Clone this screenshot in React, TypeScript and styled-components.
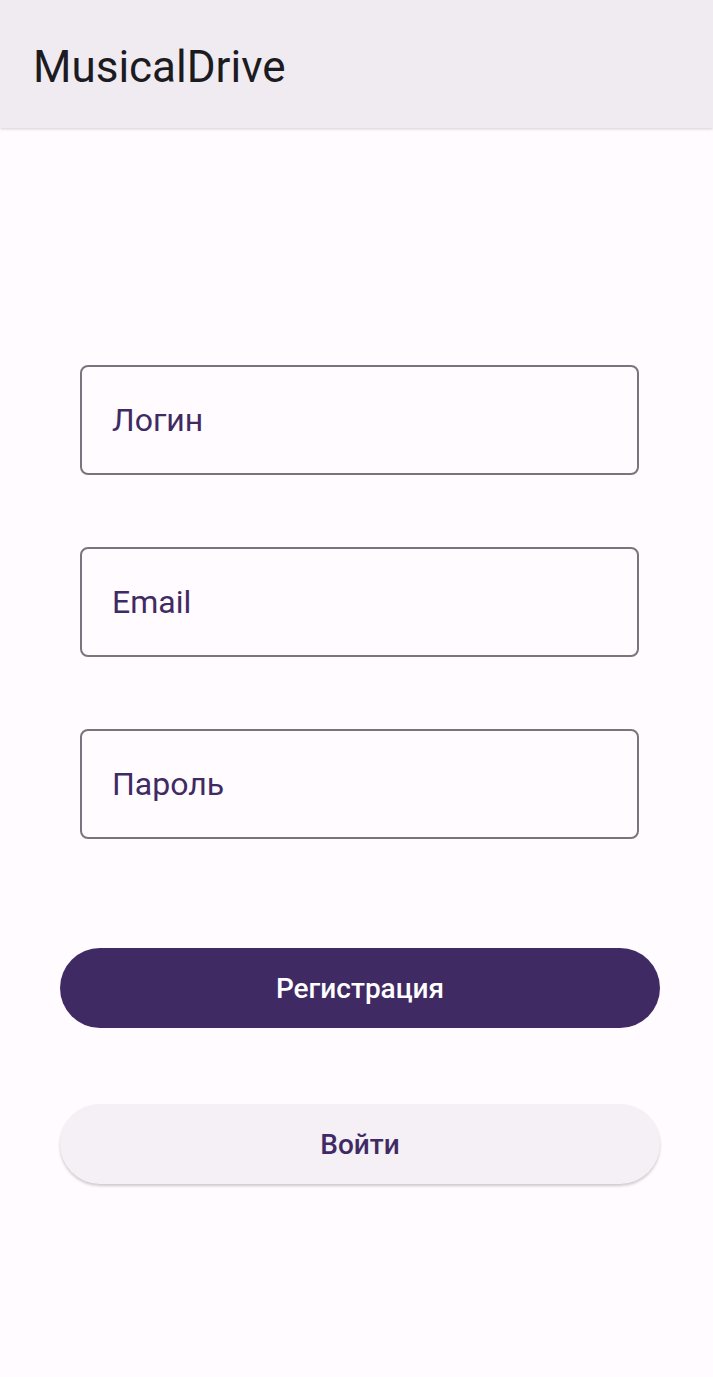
import React from "react";
import styled, { createGlobalStyle } from "styled-components";

const Global = createGlobalStyle`
  html, body { margin: 0; padding: 0; background: #FFFBFE; }
  body { font-family: Roboto, "Noto Sans", sans-serif; }
  * { box-sizing: border-box; }
`;

const Page = styled.div`
  width: 713px;
  min-height: 1377px;
  background: #FFFBFE;
  display: flex;
  flex-direction: column;
`;

const AppBar = styled.header`
  height: 128px;
  background: #EFEBF1;
  display: flex;
  align-items: center;
  padding: 6px 0 0 33px;
  box-shadow: 0 1px 3px rgba(0, 0, 0, 0.18);
  position: relative;
  z-index: 1;
`;

const Title = styled.h1`
  margin: 0;
  font-family: Roboto, sans-serif;
  font-weight: 400;
  font-size: 44px;
  color: #1C1B1F;
  letter-spacing: 0;
`;

const Form = styled.main`
  display: flex;
  flex-direction: column;
  padding: 237px 53px 0 60px;
`;

const Fields = styled.div`
  display: flex;
  flex-direction: column;
  gap: 72px;
  padding: 0 21px 0 20px;
`;

const Field = styled.div`
  height: 110px;
  border: 2px solid #79747E;
  border-radius: 8px;
  display: flex;
  align-items: center;
  padding-left: 30px;
  font-size: 32px;
  color: #3F2B63;
`;

const Buttons = styled.div`
  display: flex;
  flex-direction: column;
  gap: 76px;
  margin-top: 109px;
`;

const Button = styled.button<{ $primary?: boolean }>`
  height: 80px;
  width: 100%;
  border: none;
  border-radius: 40px;
  font-family: Roboto, sans-serif;
  font-weight: 500;
  font-size: 28px;
  background: ${(p) => (p.$primary ? "#3F2A64" : "#F4F0F5")};
  color: ${(p) => (p.$primary ? "#FFFFFF" : "#3F2A64")};
  box-shadow: ${(p) => (p.$primary ? "none" : "0 2px 3px rgba(0,0,0,0.2)")};
`;

export default function App() {
  return (
    <Page>
      <Global />
      <AppBar>
        <Title>MusicalDrive</Title>
      </AppBar>
      <Form>
        <Fields>
          <Field>Логин</Field>
          <Field>Email</Field>
          <Field>Пароль</Field>
        </Fields>
        <Buttons>
          <Button $primary>Регистрация</Button>
          <Button>Войти</Button>
        </Buttons>
      </Form>
    </Page>
  );
}
